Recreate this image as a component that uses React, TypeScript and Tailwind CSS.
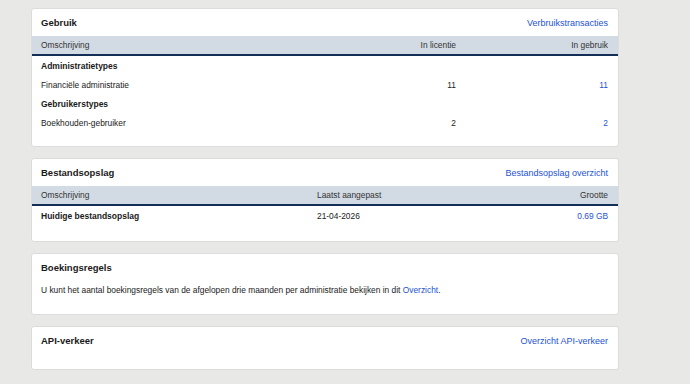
const font = { fontFamily: '"Liberation Sans", Arial, sans-serif' }

function Card({ title, link, children, pb = 'pb-[14px]' }: { title: string; link?: string; children?: React.ReactNode; pb?: string }) {
  return (
    <div className={`bg-white border border-[#dcdcda] rounded-[3px] ${pb}`}>
      <div className="flex items-center justify-between pl-[9px] pr-[10px] pt-[8px] pb-[7px] leading-[12px]">
        <span className="text-[9.5px] font-bold text-[#1a1a1a]">{title}</span>
        {link && <a className="text-[9px] text-[#2452d4]">{link}</a>}
      </div>
      {children}
    </div>
  )
}

function Band({ cols, children }: { cols: string; children: React.ReactNode }) {
  return (
    <div className={`grid ${cols} items-center h-[20px] pl-[9px] pr-[10px] bg-[#d2dbe4] border-b-2 border-[#132f57] text-[8.4px] text-[#333]`}>
      {children}
    </div>
  )
}

export default function App() {
  return (
    <div className="min-h-screen w-full bg-[#e8e8e6] pt-[8px]" style={font}>
      <div className="ml-[31px] w-[588px] flex flex-col gap-[11px]">
        <Card title="Gebruik" link="Verbruikstransacties" pb="pb-[13px]">
          <Band cols="grid-cols-[1fr_120px_152px]">
            <span>Omschrijving</span>
            <span className="text-right">In licentie</span>
            <span className="text-right">In gebruik</span>
          </Band>
          <div className="pl-[9px] pr-[10px] pt-[1px] text-[8.4px] text-[#1a1a1a]">
            <div className="h-[19px] flex items-center font-bold text-[8.5px]">Administratietypes</div>
            <div className="h-[19px] grid grid-cols-[1fr_120px_152px] items-center">
              <span>Financiële administratie</span>
              <span className="text-right">11</span>
              <span className="text-right text-[#2452d4]">11</span>
            </div>
            <div className="h-[19px] flex items-center font-bold text-[8.5px]">Gebruikerstypes</div>
            <div className="h-[19px] grid grid-cols-[1fr_120px_152px] items-center">
              <span>Boekhouden-gebruiker</span>
              <span className="text-right">2</span>
              <span className="text-right text-[#2452d4]">2</span>
            </div>
          </div>
        </Card>

        <Card title="Bestandsopslag" link="Bestandsopslag overzicht" pb="pb-[15px]">
          <Band cols="grid-cols-[276px_1fr_auto]">
            <span>Omschrijving</span>
            <span>Laatst aangepast</span>
            <span className="text-right">Grootte</span>
          </Band>
          <div className="pl-[9px] pr-[10px] pt-[1px] text-[8.4px] text-[#1a1a1a]">
            <div className="h-[19px] grid grid-cols-[276px_1fr_auto] items-center">
              <span className="font-bold text-[8.5px]">Huidige bestandsopslag</span>
              <span>21-04-2026</span>
              <span className="text-right text-[#2452d4]">0.69 GB</span>
            </div>
          </div>
        </Card>

        <Card title="Boekingsregels">
          <div className="h-[19px] flex items-center pl-[9px] pr-[10px] text-[8.4px] text-[#1a1a1a]">
            <span>
              U kunt het aantal boekingsregels van de afgelopen drie maanden per administratie bekijken in dit{' '}
              <a className="text-[#2452d4]">Overzicht</a>.
            </span>
          </div>
        </Card>

        <Card title="API-verkeer" link="Overzicht API-verkeer" pb="pb-[15px]" />
      </div>
    </div>
  )
}
